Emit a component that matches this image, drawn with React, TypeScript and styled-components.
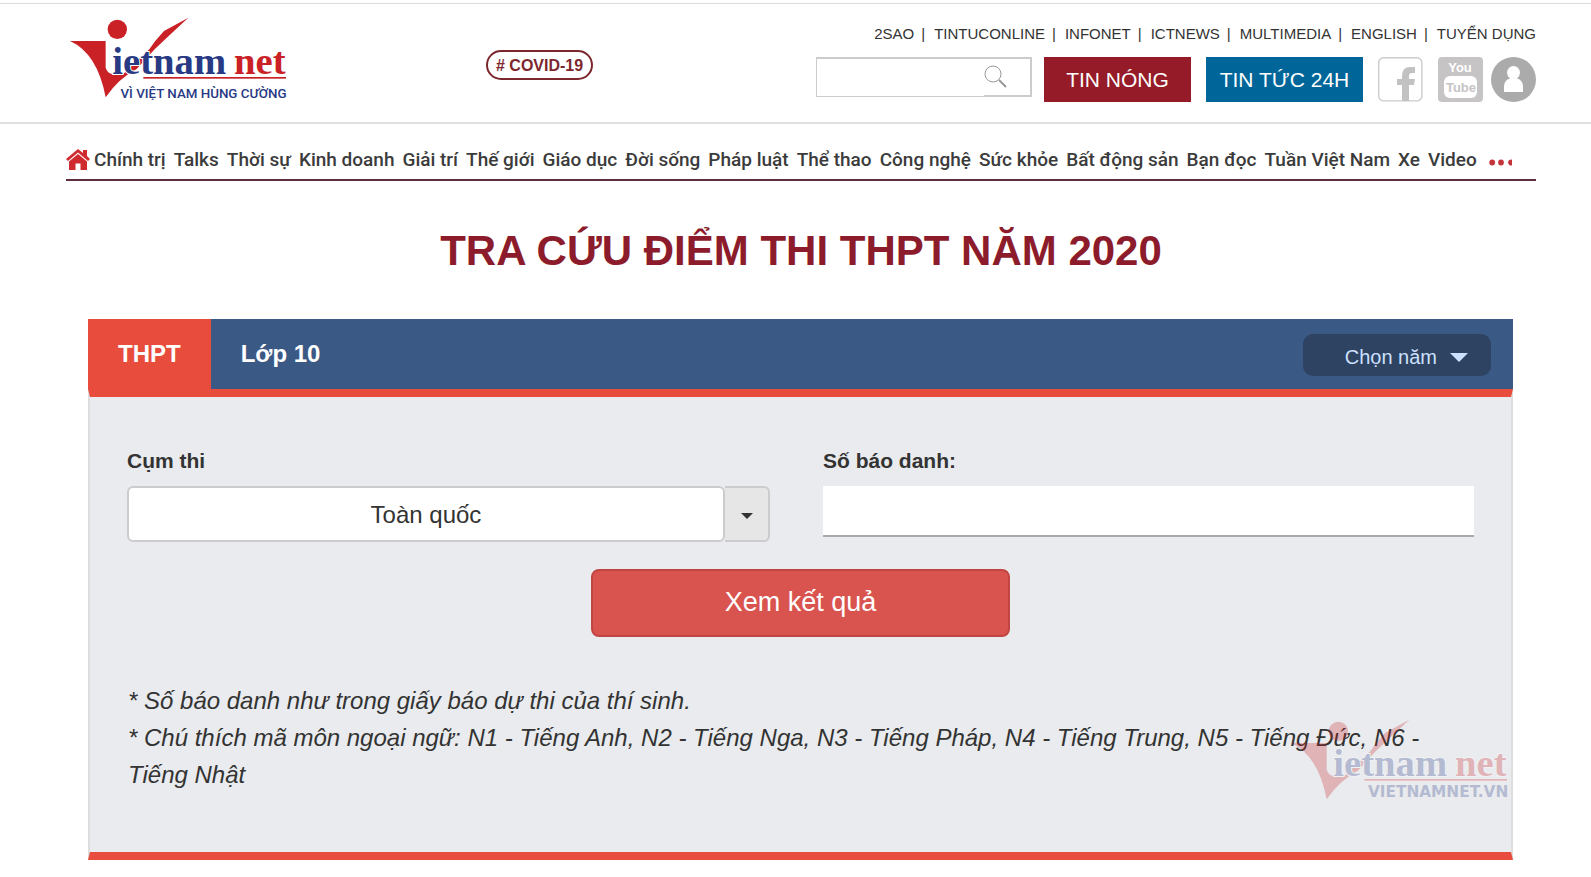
import React from "react";
import styled, { createGlobalStyle } from "styled-components";

const GlobalStyle = createGlobalStyle`
  *, *::before, *::after { box-sizing: border-box; }
  body {
    margin: 0;
    background: #fff;
    color: #333;
    font-family: "Liberation Sans", Arial, sans-serif;
  }
  a { color: inherit; text-decoration: none; }
  button, input, select { font-family: inherit; }
`;

const Page = styled.div`
  padding-top: 3px;
`;

const Header = styled.header`
  display: grid;
  grid-template-columns: 420px 1fr auto;
  align-items: start;
  height: 121px;
  padding: 0 55px 0 66px;
  border-top: 1px solid #dcdcdc;
  border-bottom: 2px solid #e0e0e0;
`;

const LogoLink = styled.a`
  display: block;
  margin-top: 10px;
  width: 224px;
`;

const LogoSvg = styled.svg`
  display: block;
  width: 224px;
  height: 88px;
  overflow: visible;
`;

const TopicTag = styled.a`
  justify-self: start;
  margin-top: 46px;
  height: 30px;
  padding: 0 8px;
  border: 2px solid #7c262d;
  border-radius: 15px;
  color: #7c262d;
  font-size: 16px;
  font-weight: bold;
  line-height: 28px;
`;

const HeaderSide = styled.div`
  width: 720px;
`;

const SiteLinks = styled.nav`
  display: flex;
  justify-content: flex-end;
  gap: 9px;
  margin-top: 21px;
  font-size: 15px;
  line-height: 17px;
`;

const SiteLink = styled.a`
  white-space: nowrap;
  &:not(:last-child)::after {
    content: "|";
    margin-left: 7px;
  }
`;

const Tools = styled.div`
  display: flex;
  align-items: flex-start;
  margin-top: 15px;
`;

const SearchBox = styled.form`
  display: flex;
  flex: 1;
  min-width: 0;
  height: 40px;
  margin-right: 12px;
  border: 2px solid #ccc;
  border-left-width: 1px;
  border-bottom-width: 1px;
`;

const SearchInput = styled.input`
  flex: 1;
  min-width: 0;
  border: 0;
  outline: 0;
  font-size: 15px;
`;

const SearchButton = styled.button`
  width: 46px;
  padding: 0;
  border: 0;
  border-bottom: 1px solid #ccc;
  background: none;
  text-align: left;
  svg { display: block; }
`;

const ToolButton = styled.a<{ $color: string; $width: number }>`
  flex: none;
  width: ${(p) => p.$width}px;
  height: 45px;
  margin-right: 15px;
  background: ${(p) => p.$color};
  color: #fff;
  font-size: 21px;
  line-height: 45px;
  text-align: center;
  white-space: nowrap;
`;

const SocialLink = styled.a<{ $gap: number }>`
  display: block;
  flex: none;
  width: 45px;
  height: 45px;
  margin-right: ${(p) => p.$gap}px;
  svg { display: block; }
`;

const Content = styled.main`
  padding: 0 55px 0 66px;
`;

const MainNav = styled.nav`
  display: flex;
  align-items: center;
  gap: 8px;
  height: 57px;
  padding-top: 16px;
  border-bottom: 2px solid #5f2f3d;
  color: #3b3b3b;
  font-family: Roboto, sans-serif;
  font-size: 19px;
  font-weight: 500;
  line-height: 24px;
  white-space: nowrap;
`;

const HomeLink = styled.a`
  width: 24px;
  margin-right: -4px;
  svg { display: block; }
`;

const MoreButton = styled.button`
  padding: 6px 0 0 4px;
  border: 0;
  background: none;
  svg { display: block; }
`;

const Title = styled.h1`
  margin: 46px 0 44px;
  color: #8c1c2b;
  font-size: 42px;
  line-height: 48px;
  text-align: center;
`;

const Panel = styled.section`
  margin: 0 23px 0 22px;
`;

const TabBar = styled.div`
  display: flex;
  height: 70px;
  background: #3b5985;
`;

const Tab = styled.button<{ $active?: boolean }>`
  padding: 0 30px;
  border: 0;
  background: ${(p) => (p.$active ? "#e74c3c" : "transparent")};
  color: #fff;
  font-size: 24px;
  font-weight: bold;
`;

const YearButton = styled.button`
  display: flex;
  align-items: center;
  justify-content: flex-end;
  gap: 13px;
  width: 188px;
  height: 42px;
  margin: 15px 22px 0 auto;
  padding: 4px 23px 0 0;
  border: 0;
  border-radius: 10px;
  background: #2e4261;
  color: #cce0ff;
  font-size: 20px;
`;

const Caret = styled.span<{ $half: number; $depth: number }>`
  border: ${(p) => p.$half}px solid transparent;
  border-top: ${(p) => p.$depth}px solid currentColor;
  border-bottom: 0;
`;

const PanelBody = styled.div`
  position: relative;
  padding: 50px 37px 59px;
  border: 2px solid #ddd;
  border-top: 8px solid #e74c3c;
  border-bottom: 8px solid #e74c3c;
  background: #e9ebee;
`;

const Fields = styled.div`
  display: grid;
  grid-template-columns: 643fr 651fr;
  column-gap: 53px;
`;

const Field = styled.div`
  display: flex;
  flex-direction: column;
`;

const FieldLabel = styled.label`
  margin-bottom: 11px;
  font-size: 21px;
  font-weight: bold;
  line-height: 28px;
`;

const SelectGroup = styled.div`
  display: flex;
  height: 56px;
`;

const RegionSelect = styled.select`
  flex: 1;
  min-width: 0;
  appearance: none;
  padding: 0 8px;
  border: 2px solid #ccc;
  border-radius: 6px;
  background: #fff;
  color: #333;
  font-size: 24px;
  text-align: center;
  text-align-last: center;
`;

const SelectArrow = styled.span`
  display: flex;
  align-items: center;
  justify-content: center;
  width: 45px;
  padding-top: 3px;
  border: 2px solid #ccc;
  border-left: 0;
  border-radius: 0 6px 6px 0;
  background: #e6e6e6;
`;

const NumberInput = styled.input`
  height: 51px;
  padding: 0 12px;
  border: 0;
  border-bottom: 2px solid #aaa;
  background: #fff;
  font-size: 24px;
`;

const SubmitButton = styled.button`
  display: block;
  width: 419px;
  height: 68px;
  margin: 27px auto 45px;
  padding: 0 0 2px;
  border: 2px solid #c14643;
  border-radius: 8px;
  background: #d9534f;
  color: #fff;
  font-size: 27px;
`;

const Note = styled.p`
  margin: 0 1px;
  font-size: 24px;
  font-style: italic;
  line-height: 37px;
`;

const Watermark = styled.div`
  position: absolute;
  right: 0;
  bottom: 48px;
  opacity: 0.27;
  pointer-events: none;
`;

const Wordmark = styled.text`
  font-family: "Liberation Serif", serif;
  font-weight: bold;
  paint-order: stroke;
`;

function Logo({ slogan, mark }: { slogan: string; mark?: boolean }) {
  return (
    <LogoSvg viewBox="18 42 672 264" role="img" aria-label="VietNamNet">
      <g fill="#ca2127">
        <circle cx="172" cy="88" r="29" />
        <path d="M30 123H137V203Q142 220 158 222H190L205 207L268 148L285 124L312 93L385 53L322 112L284 148L230 207Q176 235 137 292Q112 160 30 123Z" />
        <rect x="250" y="231" width="428" height="5" />
      </g>
      <Wordmark x="157" y="221" fontSize="116" fill="#283a84" stroke="#fff" strokeWidth="6">
        ietnam
      </Wordmark>
      <Wordmark x="522" y="221" fontSize="116" fill="#ca2127" stroke="#fff" strokeWidth="6">
        net
      </Wordmark>
      {mark ? (
        <text x="682" y="285" textAnchor="end" fontSize="46" fontWeight="bold" fontFamily="DejaVu Sans, sans-serif" fill="#283a84">
          {slogan}
        </text>
      ) : (
        <text x="680" y="294" textAnchor="end" fontSize="40" fontWeight="500" fontFamily="Roboto, sans-serif" fill="#283a84">
          {slogan}
        </text>
      )}
    </LogoSvg>
  );
}

const siteLinks = ["2SAO", "TINTUCONLINE", "INFONET", "ICTNEWS", "MULTIMEDIA", "ENGLISH", "TUYỂN DỤNG"];

const sections = [
  "Chính trị", "Talks", "Thời sự", "Kinh doanh", "Giải trí", "Thế giới", "Giáo dục",
  "Đời sống", "Pháp luật", "Thể thao", "Công nghệ", "Sức khỏe", "Bất động sản",
  "Bạn đọc", "Tuần Việt Nam", "Xe", "Video",
];

export default function App() {
  return (
    <Page>
      <GlobalStyle />
      <Header>
        <LogoLink href="#">
          <Logo slogan="VÌ VIỆT NAM HÙNG CƯỜNG" />
        </LogoLink>
        <TopicTag href="#"># COVID-19</TopicTag>
        <HeaderSide>
          <SiteLinks>
            {siteLinks.map((name) => (
              <SiteLink href="#" key={name}>{name}</SiteLink>
            ))}
          </SiteLinks>
          <Tools>
            <SearchBox>
              <SearchInput type="text" aria-label="Tìm kiếm" />
              <SearchButton type="button" aria-label="Tìm">
                <svg width="24" height="24" viewBox="0 0 24 24" fill="none" stroke="#999">
                  <circle cx="9" cy="9" r="8" />
                  <path d="M15 15L22 22" strokeWidth="2" />
                </svg>
              </SearchButton>
            </SearchBox>
            <ToolButton href="#" $color="#951b28" $width={147}>TIN NÓNG</ToolButton>
            <ToolButton href="#" $color="#006699" $width={157}>TIN TỨC 24H</ToolButton>
            <SocialLink href="#" aria-label="Facebook" $gap={15}>
              <svg width="45" height="45" viewBox="0 0 45 45">
                <rect x="0.7" y="0.7" width="43.2" height="43.2" rx="5" fill="#fff" stroke="#ccc" strokeWidth="1.4" />
                <path d="M24 44V28H19V22H24V19Q24 10 32 10H37V16H34Q31 16 31 19V22H37L36 28H31V44Z" fill="#c3c2c3" />
              </svg>
            </SocialLink>
            <SocialLink href="#" aria-label="YouTube" $gap={8}>
              <svg width="45" height="45" viewBox="0 0 45 45">
                <rect width="45" height="45" rx="4" fill="#c6c4c5" />
                <rect x="6" y="19" width="33" height="22" rx="6" fill="#fff" />
                <g fontFamily="Liberation Sans, sans-serif" fontWeight="bold" textAnchor="middle">
                  <text x="22" y="15" fontSize="13" fill="#fff">You</text>
                  <text x="23" y="35" fontSize="13" fill="#c6c4c5">Tube</text>
                </g>
              </svg>
            </SocialLink>
            <SocialLink href="#" aria-label="Tài khoản" $gap={0}>
              <svg width="45" height="45" viewBox="0 0 45 45">
                <circle cx="22.5" cy="22.5" r="22.5" fill="#ababab" />
                <path d="M13 35V30Q13 23 19 21.500Q16 19 16 15.500A6.500 6.500 0 0 1 29 15.500Q29 19 26 21.500Q32 23 32 30V35Z" fill="#fff" />
              </svg>
            </SocialLink>
          </Tools>
        </HeaderSide>
      </Header>

      <Content>
        <MainNav>
          <HomeLink href="#" aria-label="Trang chủ">
            <svg width="24" height="22" viewBox="0 0 24 22" fill="#cf2a30">
              <path d="M12 0L17 4V1H21V7L24 10L22 12L12 3.500L2 12L0 10Z" />
              <path d="M12 5L21 12.500V21H14.500V14.500H9.500V21H3V12.500Z" />
            </svg>
          </HomeLink>
          {sections.map((name) => (
            <a href="#" key={name}>{name}</a>
          ))}
          <MoreButton type="button" aria-label="Xem thêm">
            <svg width="23" height="7" viewBox="0 0 23 7" fill="#c4343b">
              <circle cx="3.200" cy="3.500" r="2.900" />
              <circle cx="12" cy="3.500" r="2.900" />
              <path d="M23 0.800A2.900 2.900 0 1 0 23 6.200Z" />
            </svg>
          </MoreButton>
        </MainNav>

        <Title>TRA CỨU ĐIỂM THI THPT NĂM 2020</Title>

        <Panel>
          <TabBar>
            <Tab type="button" $active>THPT</Tab>
            <Tab type="button">Lớp 10</Tab>
            <YearButton type="button">
              Chọn năm
              <Caret $half={9} $depth={9} />
            </YearButton>
          </TabBar>
          <PanelBody>
            <Fields>
              <Field>
                <FieldLabel htmlFor="region">Cụm thi</FieldLabel>
                <SelectGroup>
                  <RegionSelect id="region">
                    <option>Toàn quốc</option>
                  </RegionSelect>
                  <SelectArrow>
                    <Caret $half={6} $depth={6} />
                  </SelectArrow>
                </SelectGroup>
              </Field>
              <Field>
                <FieldLabel htmlFor="candidate">Số báo danh:</FieldLabel>
                <NumberInput id="candidate" type="text" />
              </Field>
            </Fields>
            <SubmitButton type="button">Xem kết quả</SubmitButton>
            <Note>* Số báo danh như trong giấy báo dự thi của thí sinh.</Note>
            <Note>
              * Chú thích mã môn ngoại ngữ: N1 - Tiếng Anh, N2 - Tiếng Nga, N3 - Tiếng Pháp, N4 - Tiếng Trung, N5 - Tiếng Đức, N6 - Tiếng Nhật
            </Note>
            <Watermark>
              <Logo slogan="VIETNAMNET.VN" mark />
            </Watermark>
          </PanelBody>
        </Panel>
      </Content>
    </Page>
  );
}
